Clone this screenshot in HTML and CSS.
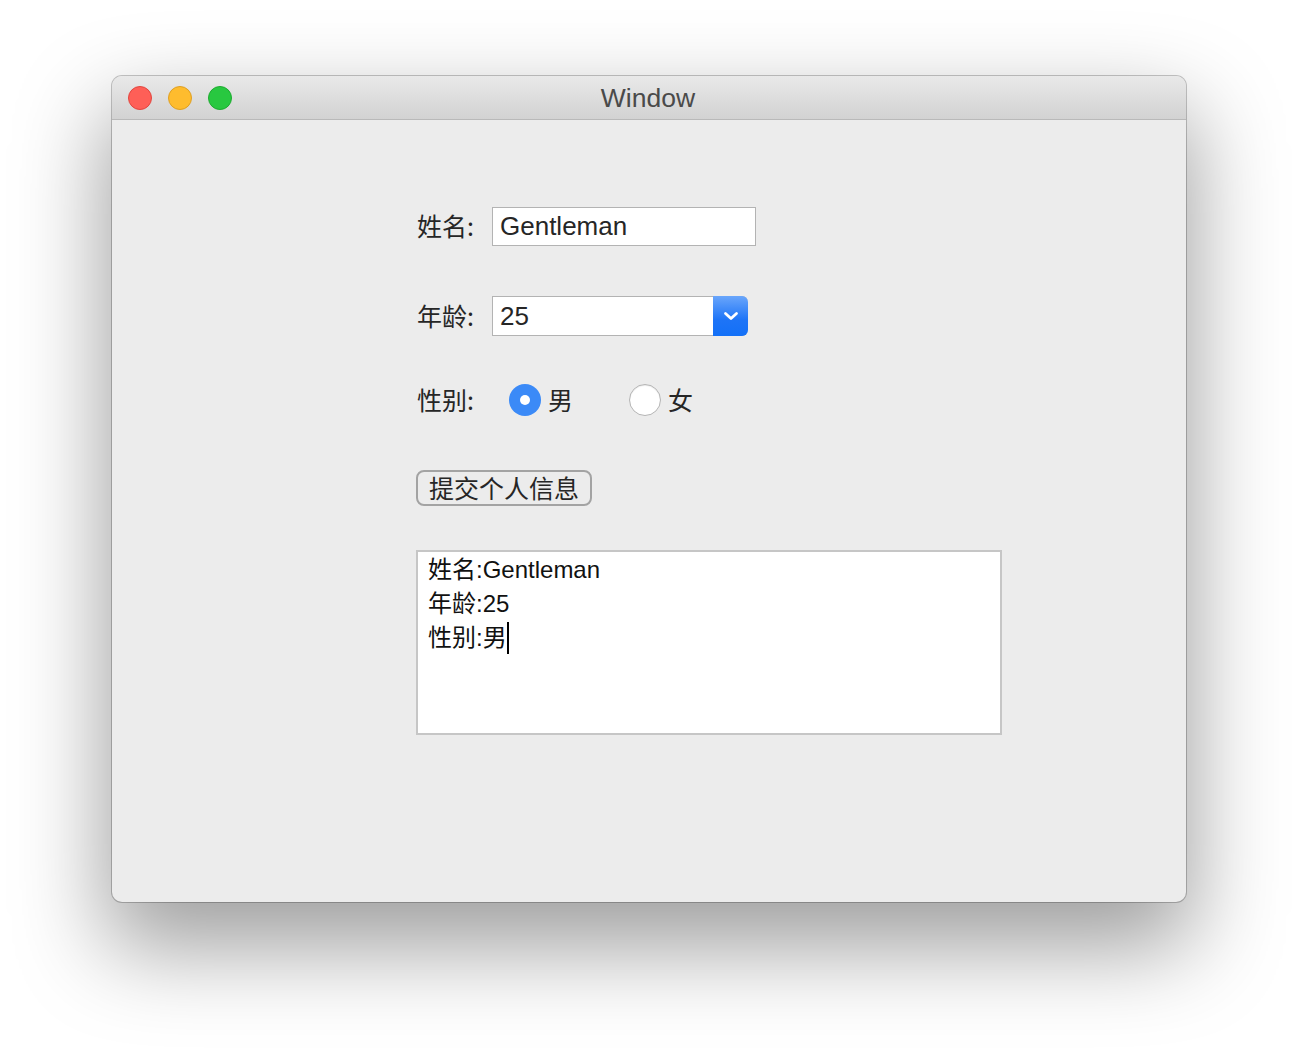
FILE: index.html
```html
<!DOCTYPE html>
<html lang="zh">
<head>
<meta charset="utf-8">
<title>Window</title>
<link rel="stylesheet" href="styles.css">
</head>
<body>
<div class="window">
  <div class="titlebar">
    <div class="lights">
      <span class="light red"></span>
      <span class="light yellow"></span>
      <span class="light green"></span>
    </div>
    <div class="title">Window</div>
  </div>
  <div class="content">
    <div class="row row-name">
      <label class="label">姓名:</label>
      <div class="field name-field">Gentleman</div>
    </div>
    <div class="row row-age">
      <label class="label">年龄:</label>
      <div class="field select-field">
        <span class="select-value">25</span>
        <span class="select-btn">
          <svg width="16" height="10" viewBox="0 0 16 10"><path d="M2.5 2.5 L8 7.5 L13.5 2.5" fill="none" stroke="#fff" stroke-width="2.8" stroke-linecap="round" stroke-linejoin="round"/></svg>
        </span>
      </div>
    </div>
    <div class="row row-gender">
      <label class="label label-gender">性别:</label>
      <span class="radio checked"></span><span class="radio-text">男</span>
      <span class="radio unchecked"></span><span class="radio-text">女</span>
    </div>
    <div class="row row-button">
      <button class="submit">提交个人信息</button>
    </div>
    <div class="output">
      <div class="line">姓名:Gentleman</div>
      <div class="line">年龄:25</div>
      <div class="line">性别:男<span class="caret"></span></div>
    </div>
  </div>
</div>
</body>
</html>
```
FILE: styles.css
```css
html, body {
  margin: 0;
  padding: 0;
  background: #ffffff;
}
body {
  width: 1298px;
  height: 1050px;
  overflow: hidden;
  font-family: "Liberation Sans", "Noto Sans CJK SC", sans-serif;
}
.window {
  margin: 76px 0 0 112px;
  width: 1074px;
  height: 826px;
  border-radius: 10px;
  background: #ececec;
  box-shadow: 0 0 0 1px rgba(0,0,0,0.22), 0 40px 90px 6px rgba(0,0,0,0.38);
  overflow: hidden;
  display: flex;
  flex-direction: column;
}
.titlebar {
  height: 43px;
  flex: none;
  background: linear-gradient(#e9e9e9, #d2d2d2);
  border-bottom: 1px solid #b9b9b9;
  display: flex;
  align-items: center;
  position: relative;
}
.lights {
  display: flex;
  gap: 16px;
  padding-left: 16px;
  padding-top: 0;
}
.light {
  width: 22px;
  height: 22px;
  border-radius: 50%;
  border: 1px solid;
}
.red { background: #fe5f57; border-color: #e1463f; }
.yellow { background: #febc2e; border-color: #de9f23; }
.green { background: #28c840; border-color: #1eab30; }
.title {
  position: absolute;
  left: 0;
  right: 0;
  top: 8px;
  text-align: center;
  font-family: "Liberation Sans", sans-serif;
  font-size: 26.5px;
  line-height: 28px;
  color: #4a4a4a;
  padding-right: 2px;
}
.content {
  flex: 1;
  padding: 87px 0 0 304px;
  display: flex;
  flex-direction: column;
  align-items: flex-start;
  color: #262626;
}
.row {
  display: flex;
  align-items: center;
}
.label {
  font-family: "Noto Sans CJK SC", sans-serif;
  font-size: 25px;
  width: 76px;
  padding-left: 1px;
  padding-bottom: 3px;
  box-sizing: border-box;
  color: #262626;
  line-height: 30px;
}
.field {
  background: #fff;
  border: 1px solid #b3b3b3;
  box-sizing: border-box;
  font-size: 26px;
  color: #262626;
  display: flex;
  align-items: center;
}
.name-field {
  width: 264px;
  height: 39px;
  padding-left: 7px;
}
.row-age {
  margin-top: 50px;
}
.select-field {
  width: 256px;
  height: 40px;
  padding-left: 7px;
  border-right: none;
  border-radius: 0 6px 6px 0;
  justify-content: space-between;
}
.select-btn {
  width: 35px;
  height: 40px;
  margin-top: -1px;
  margin-bottom: -1px;
  border-radius: 0 6px 6px 0;
  background: linear-gradient(#6aa6fb, #1d74f7 60%, #1370f7);
  display: flex;
  align-items: center;
  justify-content: center;
}
.row-gender {
  margin-top: 48px;
  height: 32px;
}
.label-gender {
  width: 93px;
}
.radio {
  width: 32px;
  height: 32px;
  border-radius: 50%;
  box-sizing: border-box;
}
.radio.checked {
  background: #3b8af7;
  position: relative;
}
.radio.checked::after {
  content: "";
  position: absolute;
  left: 11px;
  top: 11px;
  width: 10px;
  height: 10px;
  border-radius: 50%;
  background: #fff;
}
.radio.unchecked {
  background: #fff;
  border: 1px solid #b4b4b4;
  box-shadow: inset 0 1px 1px rgba(0,0,0,0.08);
}
.radio-text {
  font-family: "Noto Sans CJK SC", sans-serif;
  font-size: 25px;
  line-height: 30px;
  margin-left: 7px;
  width: 81px;
  padding-bottom: 2px;
}
.row-button {
  margin-top: 54px;
}
.submit {
  margin: 0;
  width: 176px;
  height: 36px;
  padding: 0 0 2px;
  border: 2px solid #a3a3a3;
  border-radius: 8px;
  background: #ececec;
  font-family: "Noto Sans CJK SC", sans-serif;
  font-size: 25px;
  line-height: 30px;
  color: #262626;
}
.output {
  margin-top: 44px;
  width: 586px;
  height: 185px;
  box-sizing: border-box;
  background: #fff;
  border: 2px solid #c6c6c6;
  padding: 1px 10px;
  font-family: "Liberation Sans", "Noto Sans CJK SC", sans-serif;
  font-size: 24px;
  color: #111;
}
.line {
  height: 34px;
  line-height: 34px;
  display: flex;
  align-items: center;
}
.caret {
  display: inline-block;
  width: 2px;
  height: 32px;
  background: #000;
  margin-left: 0;
}
```
